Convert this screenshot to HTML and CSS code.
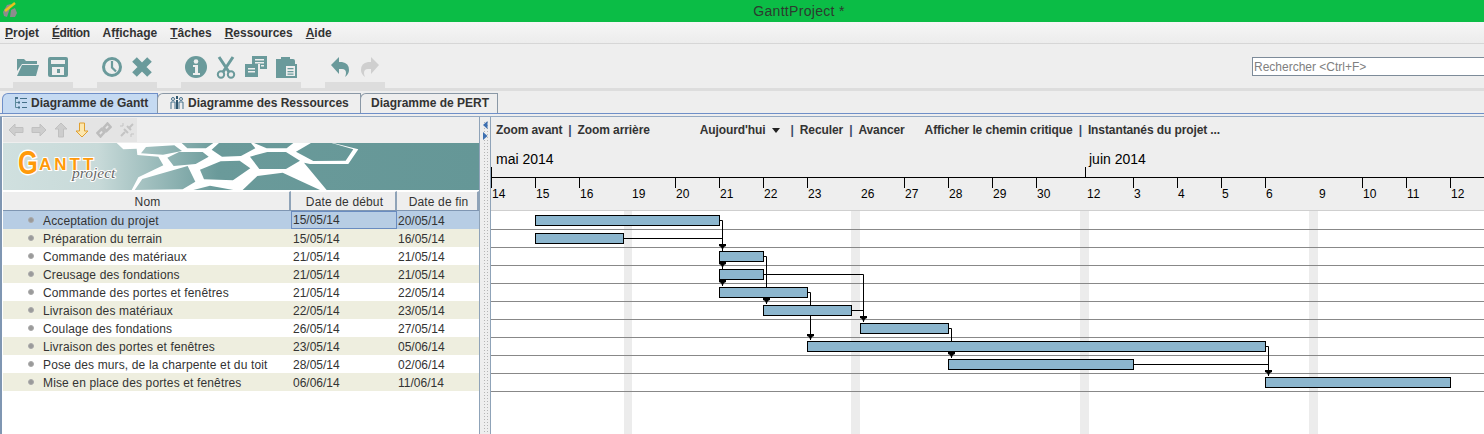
FILE: index.html
```html
<!DOCTYPE html>
<html lang="fr">
<head>
<meta charset="utf-8">
<title>GanttProject</title>
<link rel="stylesheet" href="styles.css">
</head>
<body>
<div class="app">
  <header class="titlebar">
    <svg class="app-icon" width="16" height="18" viewBox="0 0 16 18"><path d="M1 11 L5 4 L9 3 L7 10 L5 16 L2 15z" fill="#8d8d8d"/><path d="M9 9 L13 7 L15 12 L13 16 L8 16z" fill="#8d8d8d"/><path d="M3 10 L13 2" stroke="#e9c21c" stroke-width="2.5"/></svg>
    <span class="title-text">GanttProject *</span>
  </header>

  <nav class="menubar">
    <span><u>P</u>rojet</span>
    <span class="tight"><u>É</u>dition</span>
    <span>Af<u>f</u>ichage</span>
    <span><u>T</u>âches</span>
    <span><u>R</u>essources</span>
    <span><u>A</u>ide</span>
  </nav>

  <section class="toolbar">
    <div class="tool-group">
      <button class="tool"><svg width="24" height="20" viewBox="0 0 24 20"><path d="M1 2h7l2 2h11v3H6L1 14z" fill="#6a9a9b"/><path d="M6 8h17l-3 11H1z" fill="#6a9a9b"/></svg></button>
      <button class="tool"><svg width="20" height="20" viewBox="0 0 20 20"><rect width="20" height="20" rx="2" fill="#6a9a9b"/><rect x="3" y="3" width="14" height="4" fill="#eee"/><rect x="4" y="10" width="12" height="8" fill="#eee"/><rect x="9" y="12" width="3" height="4" fill="#6a9a9b"/></svg></button>
    </div>
    <div class="tool-group">
      <button class="tool"><svg width="20" height="20" viewBox="0 0 20 20"><circle cx="10" cy="10" r="8.5" fill="none" stroke="#6a9a9b" stroke-width="3"/><path d="M10 4v6.5l4 4" fill="none" stroke="#6a9a9b" stroke-width="2.2"/></svg></button>
      <button class="tool"><svg width="22" height="22" viewBox="0 0 22 22"><path d="M3.5 3.5l15 15M18.500 3.500l-15 15" stroke="#6a9a9b" stroke-width="6.500"/></svg></button>
    </div>
    <div class="tool-group">
      <button class="tool"><svg width="22" height="22" viewBox="0 0 22 22"><circle cx="11" cy="11" r="11" fill="#6a9a9b"/><circle cx="11" cy="5.500" r="2.300" fill="#eee"/><path d="M8 9h5v8h2v2H8v-2h2v-6H8z" fill="#eee"/></svg></button>
      <button class="tool"><svg width="20" height="23" viewBox="0 0 20 23"><g fill="none" stroke="#6a9a9b"><path d="M3 1l10 15M17 1L7 16" stroke-width="3"/><circle cx="5" cy="18.500" r="3.200" stroke-width="2"/><circle cx="15" cy="18.500" r="3.200" stroke-width="2"/></g></svg></button>
      <button class="tool"><svg width="22" height="22" viewBox="0 0 22 22"><path d="M7 0h15v13H15V8H7z" fill="#6a9a9b"/><path d="M0 8h13v13H0z" fill="#6a9a9b"/><path d="M10 3h9v1.500h-9zM10 6h9v1.500h-9zM16 9h3v1.500h-3zM3 12h7v1.500H3zM3 15h7v1.500H3z" fill="#eee"/></svg></button>
      <button class="tool"><svg width="22" height="22" viewBox="0 0 22 22"><path d="M1 3h5V1h9v2h3q2 0 2 2v3h-8v14H1z" fill="#6a9a9b"/><path d="M9 8h13v14H9z" fill="#6a9a9b"/><path d="M11 10h9v10h-9z" fill="#eee"/><path d="M12.500 12h6v1.300h-6zM12.500 15h6v1.300h-6zM12.500 17.500h6v1.300h-6z" fill="#6a9a9b"/></svg></button>
    </div>
    <div class="tool-group">
      <button class="tool"><svg width="18" height="20" viewBox="0 0 18 20"><path d="M8 0v5h3q7 1 7 8 0 4-4 7 1-2 1-4 0-4-4-4H8v5L0 8z" fill="#6a9a9b"/></svg></button>
      <button class="tool"><svg width="18" height="20" viewBox="0 0 18 20"><path d="M10 0v5H7q-7 1-7 8 0 4 4 7-1-2-1-4 0-4 4-4h3v5l8-9z" fill="#cfcfcf"/></svg></button>
    </div>
    <input class="search" type="text" placeholder="Rechercher <Ctrl+F>">
  </section>

  <div class="tabs">
    <div class="tab tab-active">
      <svg width="13" height="13" viewBox="0 0 13 13"><path d="M1.500 1v9.500H4M1.500 5.500H4" fill="none" stroke="#5c8a9a"/><path d="M1 0h3v2H1zM4 4.500h2v2H4zM4 9.500h2v2H4zM6 1h7v1H6zM8 5h5v1H8zM8 10h5v1H8z" fill="#45708a"/></svg>
      Diagramme de Gantt
    </div>
    <div class="tab tab-res">
      <svg width="14" height="14" viewBox="0 0 14 14"><g fill="none" stroke="#45708a"><circle cx="3" cy="3" r="1.500"/><circle cx="11" cy="3" r="1.500"/><path d="M1 13V6h4v7M9 13V6h4v7"/></g><path d="M6 0h2v3H6zM6 4h2v9H6z" fill="#2f566e"/></svg>
      Diagramme des Ressources
    </div>
    <div class="tab tab-pert">Diagramme de PERT</div>
  </div>

  <main class="workspace">
    <aside class="tasks">
      <div class="subbar">
        <div class="subtools">
          <svg width="16" height="14" viewBox="0 0 16 14"><path d="M1 7l6-6v3.500h8v5H7V13z" fill="#cdcdcd" stroke="#c0c0c0"/></svg>
          <svg width="16" height="14" viewBox="0 0 16 14"><path d="M15 7L9 1v3.500H1v5h8V13z" fill="#cdcdcd" stroke="#c0c0c0"/></svg>
          <svg width="14" height="16" viewBox="0 0 14 16"><path d="M7 1L1 7h3.500v8h5V7H13z" fill="#cdcdcd" stroke="#c0c0c0"/></svg>
          <svg width="14" height="16" viewBox="0 0 14 16"><path d="M7 15L1 9h3.500V1h5v8H13z" fill="#fde7ae" stroke="#e0a030"/></svg>
          <svg width="16" height="16" viewBox="0 0 16 16"><g fill="none" stroke="#bdbdbd" stroke-width="2.500"><path d="M1.500 11l4-4 3 3-4 4.500z"/><path d="M14.500 5l-4 4-3-3 4-4.500z"/></g></svg>
          <svg width="16" height="16" viewBox="0 0 16 16"><g fill="none" stroke="#c4c4c4" stroke-width="2"><path d="M2 14l4-4M14 2l-4 4"/><path d="M5 7l4 4M8 4l4 4"/><path d="M1 4h3M4 1v3M12 15v-3M15 12h-3" stroke-width="1"/></g></svg>
        </div>
      </div>
      <div class="banner">
        <svg width="477" height="47" viewBox="0 0 477 47">
          <g transform="translate(107,-3) scale(.3333)">
            <path fill="#fff" fill-rule="evenodd" d="M20 9H670L745 28L715 72L600 72L582 68L650 150H65L85 112L160 76L145 50L82 45L80 26L40 28Z
              M108 21L193 16L216 33L159 44L93 40Z
              M172 53L207 36L278 36L296 50L257 72L191 78Z
              M305 29L327 9H423L436 25L393 48L336 50Z
              M420 50L472 36L528 36L570 62L528 87L448 87Z
              M270 89L332 64L389 62L421 85L369 121L282 118Z
              M558 35L603 9H665L730 28L707 62L610 63Z
              M97 117L233 78L256 125L218 148L74 150Z
              M398 150L442 108L518 98L630 150Z
              M250 150L300 137L370 150Z
              M215 9L232 25H288L310 9Z
              M432 9L470 25H530L550 9Z"/>
          </g>
          <text class="logo-g" transform="translate(15,31) scale(.75,1)">G</text>
          <text class="logo-ant" x="36" y="27">ANTT</text>
          <text class="logo-project" x="69" y="35">project</text>
        </svg>
      </div>
      <div class="grid-head">
        <div class="hcell">Nom</div>
        <div class="hcell">Date de début</div>
        <div class="hcell">Date de fin</div>
      </div>
      <div class="row selected"><div class="cell name"><i class="dot"></i>Acceptation du projet</div><div class="cell date focus">15/05/14</div><div class="cell date end">20/05/14</div></div>
      <div class="row alt"><div class="cell name"><i class="dot"></i>Préparation du terrain</div><div class="cell date">15/05/14</div><div class="cell date end">16/05/14</div></div>
      <div class="row"><div class="cell name"><i class="dot"></i>Commande des matériaux</div><div class="cell date">21/05/14</div><div class="cell date end">21/05/14</div></div>
      <div class="row alt"><div class="cell name"><i class="dot"></i>Creusage des fondations</div><div class="cell date">21/05/14</div><div class="cell date end">21/05/14</div></div>
      <div class="row"><div class="cell name"><i class="dot"></i>Commande des portes et fenêtres</div><div class="cell date">21/05/14</div><div class="cell date end">22/05/14</div></div>
      <div class="row alt"><div class="cell name"><i class="dot"></i>Livraison des matériaux</div><div class="cell date">22/05/14</div><div class="cell date end">23/05/14</div></div>
      <div class="row"><div class="cell name"><i class="dot"></i>Coulage des fondations</div><div class="cell date">26/05/14</div><div class="cell date end">27/05/14</div></div>
      <div class="row alt"><div class="cell name"><i class="dot"></i>Livraison des portes et fenêtres</div><div class="cell date">23/05/14</div><div class="cell date end">05/06/14</div></div>
      <div class="row"><div class="cell name"><i class="dot"></i>Pose des murs, de la charpente et du toit</div><div class="cell date">28/05/14</div><div class="cell date end">02/06/14</div></div>
      <div class="row alt"><div class="cell name"><i class="dot"></i>Mise en place des portes et fenêtres</div><div class="cell date">06/06/14</div><div class="cell date end">11/06/14</div></div>
    </aside>

    <div class="splitter">
      <svg width="6" height="19" viewBox="0 0 6 19"><path d="M4.500 0v8L0 4z" fill="#3d6fb0"/><path d="M0 11v8l4.500-4z" fill="#3d6fb0"/></svg>
    </div>

    <section class="chart">
      <div class="chart-tools">
        <div class="ct-group"><span>Zoom avant</span><b class="sep">|</b><span>Zoom arrière</span></div>
        <div class="ct-group ct-today"><span>Aujourd'hui</span><i class="caret"></i><b class="sep sep-first">|</b><span>Reculer</span><b class="sep">|</b><span>Avancer</span></div>
        <div class="ct-group ct-path"><span>Afficher le chemin critique</span><b class="sep">|</b><span>Instantanés du projet ...</span></div>
      </div>
      <svg class="timeline" width="993" height="287" viewBox="491 147 993 287">
        <defs>
          <path id="arrow" d="M-3 0h7v2l-2 1-1.500 3-1.500-3-2-1z" fill="#000"/>
        </defs>
        <rect class="stage" x="491" y="211" width="993" height="223"/>
        <rect class="head-line" x="491" y="210" width="993" height="1"/>
        <g class="stripes">
          <rect x="624" y="211" width="8" height="223"/>
          <rect x="851" y="211" width="9" height="223"/>
          <rect x="1080" y="211" width="9" height="223"/>
          <rect x="1309" y="211" width="9" height="223"/>
        </g>
        <path class="rows" d="M491 229.500H1484M491 247.500H1484M491 265.500H1484M491 283.500H1484M491 301.500H1484M491 319.500H1484M491 337.500H1484M491 355.500H1484M491 373.500H1484M491 391.500H1484"/>
        <path class="ruler" d="M491 177.500H1484M491.500 167V188M1085.500 167V177M535.500 178V188M579.500 178V188M675.500 178V188M719.500 178V188M763.500 178V188M807.500 178V188M904.500 178V188M948.500 178V188M992.500 178V188M1036.500 178V188M1133.500 178V188M1177.500 178V188M1221.500 178V188M1265.500 178V188M1362.500 178V188M1406.500 178V188M1450.500 178V188"/>
        <text class="month" x="496" y="164">mai 2014</text>
        <text class="month" x="1089" y="164">juin 2014</text>
        <g class="day">
          <text x="492" y="198">14</text><text x="536" y="198">15</text><text x="580" y="198">16</text><text x="632" y="198">19</text><text x="676" y="198">20</text><text x="720" y="198">21</text><text x="764" y="198">22</text><text x="808" y="198">23</text><text x="861" y="198">26</text><text x="905" y="198">27</text><text x="949" y="198">28</text><text x="993" y="198">29</text><text x="1037" y="198">30</text><text x="1087" y="198">12</text><text x="1134" y="198">3</text><text x="1178" y="198">4</text><text x="1222" y="198">5</text><text x="1266" y="198">6</text><text x="1319" y="198">9</text><text x="1363" y="198">10</text><text x="1407" y="198">11</text><text x="1451" y="198">12</text>
        </g>
        <path class="links" d="M720 220.500H722.500V286M624 238.500H722.500M764 256.500H766.500V304M764 274.500H863.500V322M852 310.500H863.500M808 292.500H810.500V340M949 328.500H951.500V358M1266 346.500H1268.500V376M1134 364.500H1268.500"/>
        <g class="bars">
          <rect x="535.500" y="215.500" width="184" height="10"/>
          <rect x="535.500" y="233.500" width="88" height="10"/>
          <rect x="719.500" y="251.500" width="44" height="10"/>
          <rect x="719.500" y="269.500" width="44" height="10"/>
          <rect x="719.500" y="287.500" width="88" height="10"/>
          <rect x="763.500" y="305.500" width="88" height="10"/>
          <rect x="860.500" y="323.500" width="88" height="10"/>
          <rect x="807.500" y="341.500" width="458" height="10"/>
          <rect x="948.500" y="359.500" width="185" height="10"/>
          <rect x="1265.500" y="377.500" width="185" height="10"/>
        </g>
        <use href="#arrow" x="722" y="244"/><use href="#arrow" x="722" y="262"/><use href="#arrow" x="722" y="280"/><use href="#arrow" x="766" y="298"/><use href="#arrow" x="863" y="316"/><use href="#arrow" x="810" y="334"/><use href="#arrow" x="951" y="352"/><use href="#arrow" x="1268" y="370"/>
      </svg>
    </section>
  </main>
</div>
</body>
</html>
```

FILE: styles.css
```css
* { box-sizing: border-box; }
html, body { margin: 0; height: 434px; overflow: hidden; }
body { font-family: "Liberation Sans", Arial, sans-serif; font-size: 12px; color: #333; background: #eee; }
.app { width: 1484px; height: 434px; display: flex; flex-direction: column; overflow: hidden; }

.titlebar { height: 22px; flex: none; background: #0bbd46; display: flex; align-items: center; justify-content: center; padding-left: 114px; position: relative; }
.app-icon { position: absolute; left: 2px; top: 1px; }
.title-text { font-size: 14px; letter-spacing: .3px; color: #2d3a2f; }

.menubar { height: 22px; flex: none; display: flex; align-items: center; gap: 13px; padding-left: 5px; font-weight: 700; background: linear-gradient(#f6f6f6, #ececec); border-bottom: 1px solid #d6d6d6; }
.tight { letter-spacing: -.45px; }

.toolbar { height: 47px; flex: none; display: flex; align-items: flex-start; padding: 0 0 0 13px; gap: 24px; background: linear-gradient(#eee 44px, #ddd 44px); }
.tool-group { display: flex; height: 44px; border-bottom: 6px solid #ddd; }
.tool { width: 30px; height: 38px; padding: 8px 0 0; border: 0; background: none; display: flex; align-items: center; justify-content: center; }
.search { margin: 13px 0 0 auto; width: 232px; height: 19px; padding: 0 1px; font: 12px "Liberation Sans", Arial, sans-serif; border: 1px solid #7d8b99; border-right: 0; background: #fff; flex: none; }
.search::placeholder { color: #808080; opacity: 1; }

.tabs { height: 22px; flex: none; display: flex; align-items: flex-end; padding-left: 2px; }
.tab { height: 20px; padding-bottom: 1px; display: flex; align-items: center; font-weight: 700; border: 1px solid #8a98a6; border-bottom: 0; border-top-left-radius: 6px; background: #eee; }
.tab-active { width: 156px; padding-left: 11px; gap: 4px; background: #c5daf2; border-color: #6f8fc8; }
.tab-res { width: 204px; padding-left: 12px; gap: 4px; margin-left: -1px; }
.tab-pert { width: 138px; padding-left: 10px; margin-left: -1px; }

.workspace { flex: 1; min-height: 0; display: flex; border-top: 1px solid #6f8fc8; padding-top: 3px; position: relative; }
.workspace::before { content: ""; position: absolute; left: 0; right: 0; top: 2px; height: 1px; background: #94a9c2; }

.tasks { width: 480px; flex: none; background: #fff; border-left: 2px solid #7f96b2; border-right: 1px solid #8fa3b8; padding-left: 1px; }
.subbar { height: 26px; background: #eee; padding-top: 1px; }
.subtools { width: 134px; height: 24px; background: #e4e4e4; display: flex; align-items: center; gap: 7px; padding-left: 5px; }
.banner { height: 47px; margin-bottom: 1px; background: linear-gradient(90deg, #d0e0df 0, #c8dad9 95px, #6a9a9a 215px, #659797 100%); }
.banner svg { display: block; }
.logo-g { font: 700 34px "Liberation Sans", Arial, sans-serif; fill: #ff9a0a; stroke: #fff; stroke-width: 3px; paint-order: stroke; }
.logo-ant { font: 700 17px "Liberation Sans", Arial, sans-serif; letter-spacing: 3px; fill: #ff9a0a; stroke: #fff; stroke-width: 2px; paint-order: stroke; }
.logo-project { font: italic 15.5px "Liberation Serif", serif; fill: #666; stroke: #fff; stroke-width: 2px; paint-order: stroke; }

.grid-head { height: 20px; display: grid; grid-template-columns: 288px 106px 82px; background: #eee; border-bottom: 1px solid #7f96b2; }
.hcell { display: flex; align-items: center; justify-content: center; padding: 1px 0 0 3px; letter-spacing: .15px; border-top: 1px solid #fff; border-right: 2px solid #8fa3b8; }

.row { height: 18px; display: grid; grid-template-columns: 288px 106px 82px; align-items: stretch; background: #fff; }
.alt { background: #eeeedf; }
.selected { background: #b7cde4; }
.cell { display: flex; align-items: center; white-space: nowrap; padding-top: 1px; }
.name { padding-left: 40px; letter-spacing: .14px; position: relative; }
.dot { position: absolute; left: 25px; top: 6px; width: 6px; height: 6px; border-radius: 50%; background: #9a9a9a; border: 1px solid #aaa; }
.date { padding-left: 2px; }
.end { padding-left: 1px; }
.focus { border: 1px solid #6a8cc0; padding-left: 1px; padding-top: 0; }

.splitter { width: 11px; flex: none; padding: 4px 2px 0 3px; background: radial-gradient(#b5b5b5 0.6px, transparent 0.8px) 0 0 / 3px 3px content-box, #eee; border-right: 1px solid #8fa3b8; }
.splitter svg { display: block; }

.chart { flex: 1; min-width: 0; background: #eee; overflow: hidden; }
.chart-tools { height: 30px; display: flex; align-items: center; padding: 0 0 4px 5px; font-weight: 700; letter-spacing: -.1px; }
.ct-group { display: flex; align-items: center; }
.sep { margin: 0 6px; font-weight: 700; color: #3a4a6a; }
.ct-today { margin-left: 50px; }
.caret { width: 0; height: 0; border: 4px solid transparent; border-top: 5px solid #222; border-bottom: 0; margin-left: 6px; }
.sep-first { margin-left: 11px; }
.ct-path { margin-left: 20px; }

.timeline { display: block; }
.stage { fill: #fff; }
.head-line { fill: #cfcfcf; }
.stripes rect { fill: #ececec; }
.rows { stroke: #888; stroke-width: 1; fill: none; }
.ruler { stroke: #000; stroke-width: 1; fill: none; }
.month { font-size: 14px; fill: #000; }
.day text { font-size: 12px; fill: #000; }
.links { stroke: #000; stroke-width: 1; fill: none; }
.bars rect { fill: #8cb6ce; stroke: #000; stroke-width: 1; }
```
